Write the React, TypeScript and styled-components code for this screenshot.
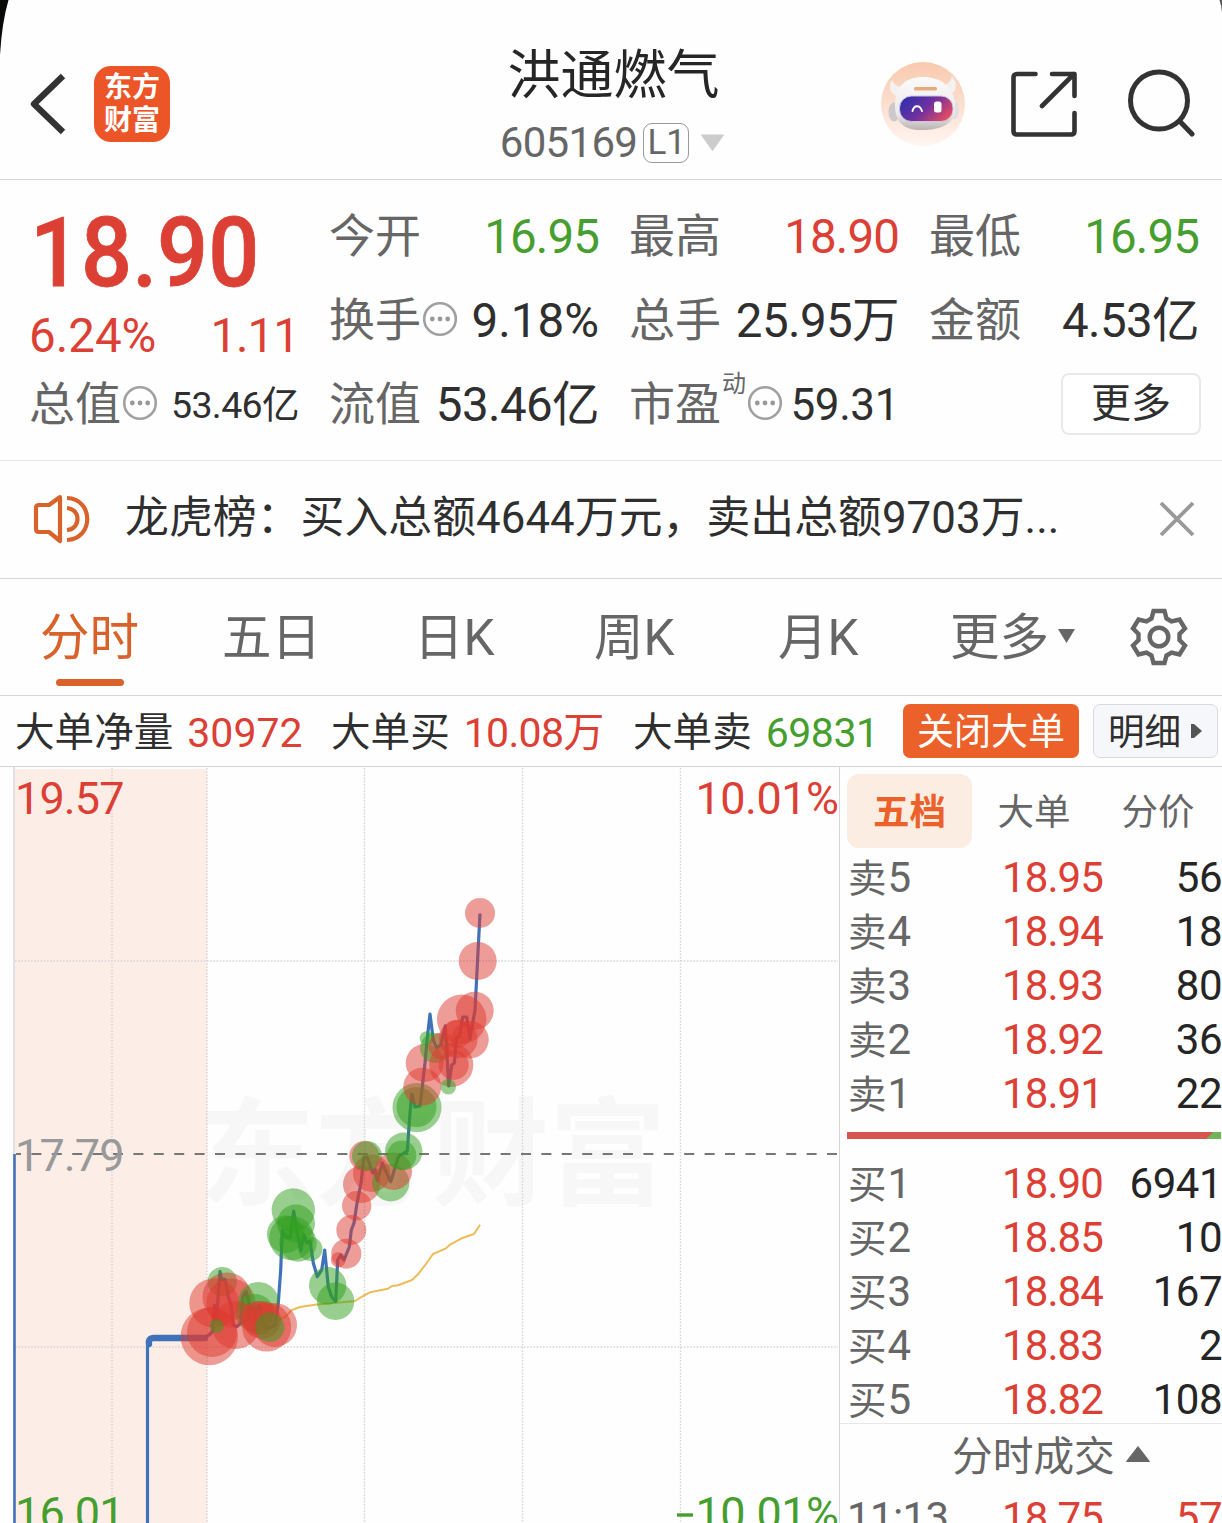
import React from 'react';
import styled, { createGlobalStyle } from 'styled-components';

const RED = '#dc4035';
const GREEN = '#469e2f';
const DARK = '#2f2f2f';
const GREY = '#666';
const ORANGE = '#ec612a';
const FONT = 'Roboto, "Noto Sans CJK SC", sans-serif';

const GlobalStyle = createGlobalStyle`
  * { box-sizing: border-box; }
  body { margin: 0; background: #fff; overflow: hidden; }
`;

const Page = styled.main`
  position: relative;
  display: flex;
  flex-direction: column;
  width: 1222px;
  height: 1523px;
  overflow: hidden;
  background: #fefefe;
  color: ${DARK};
  font-family: ${FONT};
  white-space: nowrap;
`;

const Corners = styled.svg`
  position: absolute;
  inset: 0 0 auto 0;
  pointer-events: none;
`;

/* ---------- header ---------- */
const Header = styled.header`
  display: grid;
  grid-template-columns: 1fr auto 1fr;
  height: 180px;
  padding: 0 27px 0 30px;
  border-bottom: 1px solid #d6d7d9;
`;

const HeaderLeft = styled.div`
  display: flex;
  align-items: center;
  gap: 27px;
  height: 208px;
`;

const HeaderRight = styled(HeaderLeft)`
  justify-content: flex-end;
  gap: 0;
`;

const Logo = styled.div`
  display: grid;
  place-content: center;
  width: 76px;
  height: 76px;
  border-radius: 17px;
  background: #ec5528;
  color: #fff;
  font-size: 28px;
  font-weight: 700;
  line-height: 33px;
`;

const TitleBlock = styled.div`
  display: flex;
  flex-direction: column;
  align-items: center;
`;

const Title = styled.h1`
  margin: 42px 0 0 2px;
  font-size: 53px;
  font-weight: 400;
  line-height: 68px;
  color: #262626;
`;

const CodeLine = styled.div`
  display: flex;
  align-items: center;
  height: 65px;
  font-size: 42px;
  line-height: 50px;
  letter-spacing: -0.7px;
  color: ${GREY};
`;

const Level = styled.span`
  height: 40px;
  width: 46px;
  margin: 0 11px 0 6px;
  padding-left: 1px;
  border: 1.5px solid #999;
  border-radius: 9px;
  text-align: center;
  font-size: 35px;
  line-height: 38px;
  letter-spacing: 0;
`;

/* ---------- quote summary ---------- */
const Summary = styled.section`
  display: grid;
  grid-template-columns: repeat(4, 270px);
  grid-template-rows: repeat(3, 84px);
  column-gap: 30px;
  height: 281px;
  padding: 15px 0 0 29px;
  border-bottom: 1px solid #e8e8ea;
`;

const PriceBlock = styled.div`
  grid-row: span 2;
  color: ${RED};
`;

const Price = styled.div`
  padding: 8px 0 0 1px;
  font-size: 97px;
  font-weight: 500;
  line-height: 100px;
  transform: scaleX(0.927);
  transform-origin: 0 0;
  -webkit-text-stroke: 0.8px ${RED};
`;

const Change = styled.div`
  display: flex;
  justify-content: space-between;
  font-size: 47.5px;
  line-height: 66px;
`;

const ChangeAmount = styled.span`
  letter-spacing: -1px;
`;

const Cell = styled.div`
  display: flex;
  align-items: center;
  font-size: 46px;
  line-height: 60px;
`;

const Label = styled.span`
  margin-bottom: 3px;
  color: ${GREY};
`;

const Sup = styled.span`
  align-self: flex-start;
  margin-left: 1px;
  font-size: 24px;
  line-height: 42px;
  color: ${GREY};
`;

const Value = styled.span<{ $color?: string; $size?: number; $track?: number }>`
  margin-left: auto;
  color: ${p => p.$color || DARK};
  font-size: ${p => p.$size || 47.5}px;
  letter-spacing: ${p => p.$track ?? -0.6}px;
`;

const InfoIcon = styled.svg`
  flex: none;
  margin: 0 0 5px 1px;
`;

const MoreButton = styled.button`
  width: 140px;
  height: 62px;
  margin: 0 -2px 3px auto;
  padding: 0;
  border: 2px solid #e8e9ea;
  border-radius: 8px;
  background: #fff;
  color: ${DARK};
  font: 40px/55px ${FONT};
`;

/* ---------- notice ---------- */
const Notice = styled.section`
  display: flex;
  align-items: center;
  height: 118px;
  padding: 0 27px 0 33px;
  border-bottom: 1px solid #d6d7d9;
  & > svg { margin-bottom: 1px; }
`;

const NoticeText = styled.p`
  flex: 1;
  margin: 0 0 4px 34px;
  font-size: 43.8px;
  line-height: 60px;
  letter-spacing: 0.08px;
`;

/* ---------- period tabs ---------- */
const Tabs = styled.nav`
  display: grid;
  grid-template-columns: 182px 192px 180px 184px 172px 180px auto;
  height: 117px;
  padding-left: 40px;
  border-bottom: 1px solid #d6d7d9;
`;

const Tab = styled.div<{ $active?: boolean }>`
  padding-top: 20px;
  font-size: 49.5px;
  line-height: 78px;
  color: ${p => (p.$active ? '#d9622b' : GREY)};
  &::after {
    content: '';
    display: ${p => (p.$active ? 'block' : 'none')};
    width: 68px;
    height: 7px;
    margin: 2px 0 0 16px;
    border-radius: 4px;
    background: #d9622b;
  }
`;

const MoreTab = styled.div`
  display: flex;
  align-items: center;
  gap: 9px;
  height: 116px;
  padding-top: 2px;
  font-size: 49.5px;
  line-height: 78px;
  color: ${GREY};
  & > svg { margin-bottom: 4px; }
`;

const GearCell = styled.div`
  display: flex;
  align-items: center;
  height: 116px;
`;

/* ---------- large orders ---------- */
const OrderBar = styled.section`
  display: flex;
  align-items: center;
  height: 71px;
  padding: 0 4px 0 15px;
  border-bottom: 1px solid #d3d5d6;
  font-size: 39.6px;
  line-height: 56px;
`;

const OrderItem = styled.div<{ $w: number }>`
  display: flex;
  gap: 14px;
  width: ${p => p.$w}px;
  margin-top: 3px;
`;

const Num = styled.span<{ $color: string; $track?: number }>`
  color: ${p => p.$color};
  letter-spacing: ${p => p.$track || 0}px;
  font-size: 41px;
`;

const CloseOrders = styled.button`
  width: 176px;
  height: 54px;
  margin-right: 14px;
  padding: 3px 0 0;
  border: 0;
  border-radius: 7px;
  background: ${ORANGE};
  color: #fff;
  font: 37px/51px ${FONT};
`;

const DetailButton = styled.button`
  display: flex;
  align-items: center;
  gap: 10px;
  width: 125px;
  height: 54px;
  padding: 2px 0 0 14px;
  border: 1.5px solid #d8dade;
  border-radius: 7px;
  background: #f6f7fa;
  color: ${DARK};
  font: 36.6px/49px ${FONT};
  & > svg { margin-bottom: 3px; }
`;

/* ---------- body ---------- */
const Body = styled.section`
  display: grid;
  grid-template-columns: 839px 1fr;
  height: 756px;
`;

const Side = styled.aside`
  border-left: 1px solid #d6d7d9;
`;

const SideTabs = styled.div`
  display: flex;
  align-items: center;
  height: 80px;
  padding: 7px 0 0 7px;
`;

const SideTab = styled.div<{ $active?: boolean }>`
  width: ${p => (p.$active ? 125 : 124)}px;
  height: 74px;
  padding-top: 4px;
  border-radius: 12px;
  text-align: center;
  font-size: 36.5px;
  line-height: 70px;
  font-weight: ${p => (p.$active ? 700 : 400)};
  color: ${p => (p.$active ? ORANGE : GREY)};
  background: ${p => (p.$active ? '#fcede3' : 'transparent')};
`;

const LadderRow = styled.div`
  display: grid;
  grid-template-columns: 154px 108px 1fr;
  align-items: baseline;
  height: 54px;
  padding: 8px 0 0 8px;
  font-size: 42px;
  line-height: 46px;
`;

const Rank = styled.span`
  color: ${GREY};
  font-size: 38.5px;
  & > b { font-weight: 400; font-size: 42px; margin-left: 1px; }
`;

const Time = styled.span`
  margin-left: -1px;
  color: ${GREY};
  letter-spacing: -0.6px;
`;

const LadderPrice = styled.span`
  color: ${RED};
  letter-spacing: -0.9px;
`;

const Volume = styled.span<{ $color?: string }>`
  text-align: right;
  letter-spacing: -0.5px;
  color: ${p => p.$color || '#252525'};
`;

const Ratio = styled.div`
  height: 7px;
  margin: 15px 1px 14px 7px;
  background: linear-gradient(135deg, #d8544e 258.5px, #6fb558 259.5px);
`;

const DealHead = styled.div`
  display: flex;
  align-items: center;
  height: 64px;
  padding: 2px 0 0 112px;
  gap: 10px;
  border-top: 1px solid #e6e7e8;
  color: ${GREY};
  font-size: 40.7px;
  line-height: 60px;
  & > svg { margin-bottom: 6px; }
`;

const InfoDots = () => (
  <InfoIcon width="36" height="36" viewBox="0 0 36 36">
    <circle cx="18" cy="18" r="15.8" fill="none" stroke="#a0a0a0" strokeWidth="2.6" />
    <g fill="#999">
      <circle cx="10.3" cy="18" r="2.4" />
      <circle cx="18" cy="18" r="2.4" />
      <circle cx="25.7" cy="18" r="2.4" />
    </g>
  </InfoIcon>
);

const RobotSvg = styled.svg`
  margin-right: 45px;
`;

const ShareSvg = styled.svg`
  margin-right: 49px;
`;

const Robot = () => (
  <RobotSvg width="84" height="84" viewBox="0 0 84 84">
    <defs>
      <linearGradient id="halo" x1="0" y1="0" x2="0" y2="1">
        <stop offset="0" stopColor="#f8c9ad" />
        <stop offset="0.6" stopColor="#fce3d6" />
        <stop offset="1" stopColor="#fff6f1" />
      </linearGradient>
      <linearGradient id="visor" x1="0" y1="0.2" x2="1" y2="0.7">
        <stop offset="0" stopColor="#2c2fae" />
        <stop offset="0.5" stopColor="#70309f" />
        <stop offset="1" stopColor="#ea4d60" />
      </linearGradient>
      <linearGradient id="shell" x1="0" y1="0" x2="0" y2="1">
        <stop offset="0" stopColor="#fbfafa" />
        <stop offset="0.7" stopColor="#ece9ea" />
        <stop offset="1" stopColor="#b9b2b3" />
      </linearGradient>
    </defs>
    <circle cx="42" cy="42" r="42" fill="url(#halo)" />
    <path d="M11 18C7 25 9 32 17 35L25 25C18 26 13 23 11 18ZM71 14C77 22 76 29 69 33L61 24C67 23 70 19 71 14Z" fill="#f4f1f1" />
    <ellipse cx="13" cy="50" rx="5.5" ry="9.500" fill="#cdc8ca" />
    <ellipse cx="73" cy="48" rx="5" ry="9.500" fill="#e2dee0" />
    <path d="M14 43C14 24 25 15 42 15S72 24 74 41C76 58 66 67 44 68C22 69 14 60 14 43Z" fill="url(#shell)" />
    <rect x="18.5" y="34" width="53.5" height="25.5" rx="12" fill="url(#visor)" stroke="#cfc6da" strokeWidth="1" />
    <rect x="33" y="25" width="23" height="3.4" rx="1.5" fill="#e8ab78" />
    <path d="M31.500 49C33 42.500 39 42.500 41 49" fill="none" stroke="#fff" strokeWidth="2" strokeLinecap="round" />
    <rect x="53" y="39.5" width="7.5" height="11" rx="2.5" fill="#fff" />
  </RobotSvg>
);

type Bubble = ['r' | 'g', number, number, number];
const bubbles: Bubble[] = [
  ['g', 222.3, 1281.7, 14.7], ['r', 214, 1303, 24.7], ['r', 227, 1297, 24.5], ['r', 231, 1303, 24.5],
  ['g', 258.5, 1302.5, 20.5], ['g', 255, 1313, 19],
  ['r', 209.3, 1336.5, 28.7], ['r', 212, 1332, 25], ['r', 235.7, 1325, 24],
  ['g', 216.7, 1326, 7], ['r', 258, 1318, 17], ['r', 262, 1320, 19],
  ['r', 266.7, 1327, 24.5], ['r', 275, 1325, 22], ['g', 269.7, 1327.3, 14.7],
  ['g', 293.3, 1210, 21.7], ['g', 296, 1223.5, 19], ['g', 285.6, 1234.3, 18.7], ['g', 291.5, 1238, 22.3],
  ['g', 298, 1243, 18.7], ['g', 310.5, 1249, 12], ['g', 327.7, 1285.7, 18.7], ['g', 335.6, 1301.3, 18.7],
  ['r', 338.3, 1259.7, 7.5], ['r', 346.3, 1253.7, 15], ['r', 351.3, 1230, 15], ['r', 356.7, 1205.7, 14.7],
  ['r', 361.7, 1184.3, 18.7], ['r', 371.7, 1173.3, 18.7], ['r', 364.3, 1156, 15], ['g', 367, 1156, 15],
  ['g', 390.7, 1182.7, 18.7], ['r', 393.3, 1171.3, 18.7], ['g', 403.7, 1151.3, 18.7], ['g', 401.7, 1155.3, 14.7],
  ['g', 417, 1107.5, 24.5], ['g', 416.5, 1107, 20], ['r', 422.3, 1086.7, 19], ['r', 424.7, 1063, 19],
  ['g', 426.7, 1038.3, 7], ['g', 435, 1048, 15], ['r', 442, 1046, 13.5],
  ['r', 461.7, 1019.3, 24.7], ['r', 474.7, 1010.7, 19], ['r', 470, 1039.7, 18.7], ['r', 458.3, 1039, 19.3],
  ['r', 457, 1034, 14], ['r', 451.3, 1065, 22], ['r', 453.7, 1065, 15], ['g', 448.3, 1086.7, 7.7],
  ['r', 477.7, 961, 19], ['r', 480, 913, 15],
];

const priceLine =
  'M147.5 1524V1345L149 1340L153 1338H203L209 1335L212.5 1331.5L214.5 1305L216.5 1320L220 1271.5L221.7 1279.3H225L228.3 1297L231 1305L233.3 1325L236.7 1326.7L240.7 1323.3L242.7 1297L246 1291.7L250 1307L255 1313L259.3 1305L263.3 1323L267.3 1329L275.3 1325L278.3 1303L280.7 1270L282.3 1230L286 1237.3L290 1238L293.7 1211L297.3 1233L300.7 1251L304 1235L306.7 1243L310 1241L313.3 1263L317.3 1276.7L321.7 1270L324.7 1250L328.3 1287L331.7 1297L335.7 1301.3L337.7 1260L340.7 1255L344 1260L349.3 1247L351.3 1230L354 1223L356.7 1205L361 1183L364 1157H367L372.7 1173L375 1169L377.3 1181L382.3 1163L386.7 1173L390.7 1181.7L398.3 1157L407.3 1150.7L410 1113L411.7 1094L415 1107L420 1106L425 1063L427.3 1038L430 1014L433.3 1040L436.7 1047.7L440.7 1045L445.3 1026L448.7 1086L451.7 1065L454.3 1063L456.7 1037H459.3L462.7 1017L466.7 1017L470 1039L475 1010L480 913.5';

const averageLine =
  'M278 1320L285 1317L292 1310L300 1307L315 1304.7L336.7 1302.7L355 1301L363 1296L370 1292.3L388 1288.7L392 1286L398 1285.3L412 1280L418 1274.3L426 1264L433 1254L446 1248.3L450 1244.7L463 1237.7L474 1234L480 1224.7';

const Chart = () => (
  <svg width="839" height="756" viewBox="0 767 839 756" fontFamily={FONT}>
    <rect x="15" y="769" width="192" height="760" fill="#fceee7" />
    <text x="198" y="1196" fontSize="117" fontWeight="700" fill="#000" fillOpacity="0.027">东方财富</text>
    <g stroke="#d8d4d3" strokeWidth="1.4" strokeDasharray="1.6 1.6">
      <path d="M112 768V1523M207 768V1523M364.5 768V1523M522.5 768V1523M680.5 768V1523M15 961H838M15 1347H838" />
    </g>
    <path d="M14 767V1523" stroke="#d9dadb" strokeWidth="1.6" />
    <path d="M16 1154H838" stroke="#777" strokeWidth="1.8" strokeDasharray="10 10.4" strokeDashoffset="5" />
    <path d="M14.5 1154V1523" stroke="#4470b4" strokeWidth="2.6" />
    <path d={averageLine} fill="none" stroke="#edbc58" strokeWidth="2" strokeLinejoin="round" />
    <path d={priceLine} fill="none" stroke="#3f72b8" strokeWidth="3.2" strokeLinejoin="round" />
    <path d="M149 1344Q148 1338 154 1338H205" fill="none" stroke="#3f72b8" strokeWidth="6.4" strokeLinecap="round" />
    {bubbles.map(([k, x, y, r], i) => (
      <circle key={i} cx={x} cy={y} r={r} fill={k === 'r' ? '#de392f' : '#319f1e'} fillOpacity="0.5" />
    ))}
    <g fontSize="45" letterSpacing="-0.9">
      <text x="15" y="814" fill={RED}>19.57</text>
      <text x="838.5" y="814" fill={RED} textAnchor="end" letterSpacing="-0.5">10.01%</text>
      <text x="15" y="1171" fill="#999">17.79</text>
      <text x="15" y="1529" fill={GREEN}>16.01</text>
      <text x="838.5" y="1529" fill={GREEN} textAnchor="end" letterSpacing="-0.5">10.01%</text>
      <path d="M677 1515H693" stroke={GREEN} strokeWidth="3.4" />
    </g>
  </svg>
);

const sells = [['5', '18.95', '56'], ['4', '18.94', '18'], ['3', '18.93', '80'], ['2', '18.92', '36'], ['1', '18.91', '22']];
const buys = [['1', '18.90', '6941'], ['2', '18.85', '10'], ['3', '18.84', '167'], ['4', '18.83', '2'], ['5', '18.82', '108']];

const Ladder = ({ side, rows }: { side: string; rows: string[][] }) => (
  <>
    {rows.map(([level, price, volume]) => (
      <LadderRow key={level}>
        <Rank>{side}<b>{level}</b></Rank>
        <LadderPrice>{price}</LadderPrice>
        <Volume>{volume}</Volume>
      </LadderRow>
    ))}
  </>
);

export default function App() {
  return (
    <Page>
      <GlobalStyle />
      <Header>
        <HeaderLeft>
          <svg width="37" height="64" viewBox="0 0 37 64">
            <path d="M33 4L4 32L33 60" fill="none" stroke="#333" strokeWidth="6.4" strokeLinejoin="round" />
          </svg>
          <Logo><span>东方</span><span>财富</span></Logo>
        </HeaderLeft>
        <TitleBlock>
          <Title>洪通燃气</Title>
          <CodeLine>
            605169<Level>L1</Level>
            <svg width="25" height="18" viewBox="0 0 25 18"><path d="M1.5 1H23.5L12.5 16.5Z" fill="#ccc" stroke="#ccc" strokeLinejoin="round" /></svg>
          </CodeLine>
        </TitleBlock>
        <HeaderRight>
          <Robot />
          <ShareSvg width="68" height="68" viewBox="0 0 68 68" fill="none" stroke="#333" strokeWidth="4.6" strokeLinecap="round" strokeLinejoin="round">
            <path d="M25.5 4H7Q3.5 4 3.5 7.5V61Q3.5 64.5 7 64.5H61Q64.5 64.5 64.5 61V43M42 4H64.5V26M64 4L32 36" />
          </ShareSvg>
          <svg width="68" height="70" viewBox="0 0 68 70" fill="none" stroke="#333" strokeWidth="5" strokeLinecap="round">
            <circle cx="32" cy="31.5" r="28.5" />
            <path d="M53 52.5L65 65" />
          </svg>
        </HeaderRight>
      </Header>

      <Summary>
        <PriceBlock>
          <Price>18.90</Price>
          <Change><span>6.24%</span><ChangeAmount>1.11</ChangeAmount></Change>
        </PriceBlock>
        <Cell><Label>今开</Label><Value $color={GREEN} $track={-0.9}>16.95</Value></Cell>
        <Cell><Label>最高</Label><Value $color={RED} $track={-0.9}>18.90</Value></Cell>
        <Cell><Label>最低</Label><Value $color={GREEN} $track={-0.9}>16.95</Value></Cell>
        <Cell><Label>换手</Label><InfoDots /><Value $track={0}>9.18%</Value></Cell>
        <Cell><Label>总手</Label><Value>25.95万</Value></Cell>
        <Cell><Label>金额</Label><Value>4.53亿</Value></Cell>
        <Cell><Label>总值</Label><InfoDots /><Value $size={37.5}>53.46亿</Value></Cell>
        <Cell><Label>流值</Label><Value>53.46亿</Value></Cell>
        <Cell><Label>市盈</Label><Sup>动</Sup><InfoDots /><Value $size={44} $track={-0.4}>59.31</Value></Cell>
        <Cell><MoreButton>更多</MoreButton></Cell>
      </Summary>

      <Notice>
        <svg width="58" height="50" viewBox="0 0 58 50" fill="none" stroke="#d9622b" strokeWidth="4.2" strokeLinejoin="round">
          <path d="M27 3L16 11H6Q3 11 3 14V35Q3 38 6 38H16L27 47ZM34 4C61 5 61 45 34 46M34 14C48 15 48 35 34 36" />
        </svg>
        <NoticeText>龙虎榜：买入总额4644万元，卖出总额9703万...</NoticeText>
        <svg width="36" height="36" viewBox="0 0 36 36"><path d="M2 2L34 34M34 2L2 34" stroke="#999" strokeWidth="3.8" /></svg>
      </Notice>

      <Tabs>
        <Tab $active>分时</Tab>
        <Tab>五日</Tab>
        <Tab>日K</Tab>
        <Tab>周K</Tab>
        <Tab>月K</Tab>
        <MoreTab>更多<svg width="17" height="14" viewBox="0 0 17 14"><path d="M0 0H17L8.5 14Z" fill="#666" /></svg></MoreTab>
        <GearCell>
          <svg width="58" height="58" viewBox="0 0 58 58" fill="none" stroke="#666" strokeWidth="4.4">
            <path d="M23.5 3H34.5L36.5 10.5L41.5 13.5L49.5 11.5L55 20.5L49.5 26V32L55 37.5L49.5 46.5L41.5 44.5L36.5 47.5L34.5 55H23.5L21.5 47.5L16.5 44.5L8.5 46.5L3 37.5L8.5 32V26L3 20.5L8.5 11.5L16.5 13.5L21.5 10.5Z" />
            <circle cx="29" cy="29" r="9.3" />
          </svg>
        </GearCell>
      </Tabs>

      <OrderBar>
        <OrderItem $w={316}><span>大单净量</span><Num $color={RED}>30972</Num></OrderItem>
        <OrderItem $w={302}><span>大单买</span><Num $color={RED} $track={-0.7}>10.08万</Num></OrderItem>
        <OrderItem $w={270}><span>大单卖</span><Num $color={GREEN} $track={-0.5}>69831</Num></OrderItem>
        <CloseOrders>关闭大单</CloseOrders>
        <DetailButton>明细<svg width="11" height="16" viewBox="0 0 11 16"><path d="M0 1H3L11 8L3 15H0Z" fill="#555" /></svg></DetailButton>
      </OrderBar>

      <Body>
        <Chart />
        <Side>
          <SideTabs>
            <SideTab $active>五档</SideTab>
            <SideTab>大单</SideTab>
            <SideTab>分价</SideTab>
          </SideTabs>
          <Ladder side="卖" rows={sells} />
          <Ratio />
          <Ladder side="买" rows={buys} />
          <DealHead>
            分时成交
            <svg width="26" height="18" viewBox="0 0 26 18"><path d="M13 1.5L24.5 16.5H1.5Z" fill="#666" stroke="#666" strokeLinejoin="round" /></svg>
          </DealHead>
          <LadderRow>
            <Time>11:13</Time>
            <LadderPrice>18.75</LadderPrice>
            <Volume $color={RED}>57</Volume>
          </LadderRow>
        </Side>
      </Body>
      <Corners width="1222" height="60" viewBox="0 0 1222 60">
        <path d="M0 0H8.5Q2 22 0 55Z" fill="#0a0a08" />
        <path d="M1222 0H1219.5Q1221.5 6 1222 12Z" fill="#555" />
      </Corners>
    </Page>
  );
}
